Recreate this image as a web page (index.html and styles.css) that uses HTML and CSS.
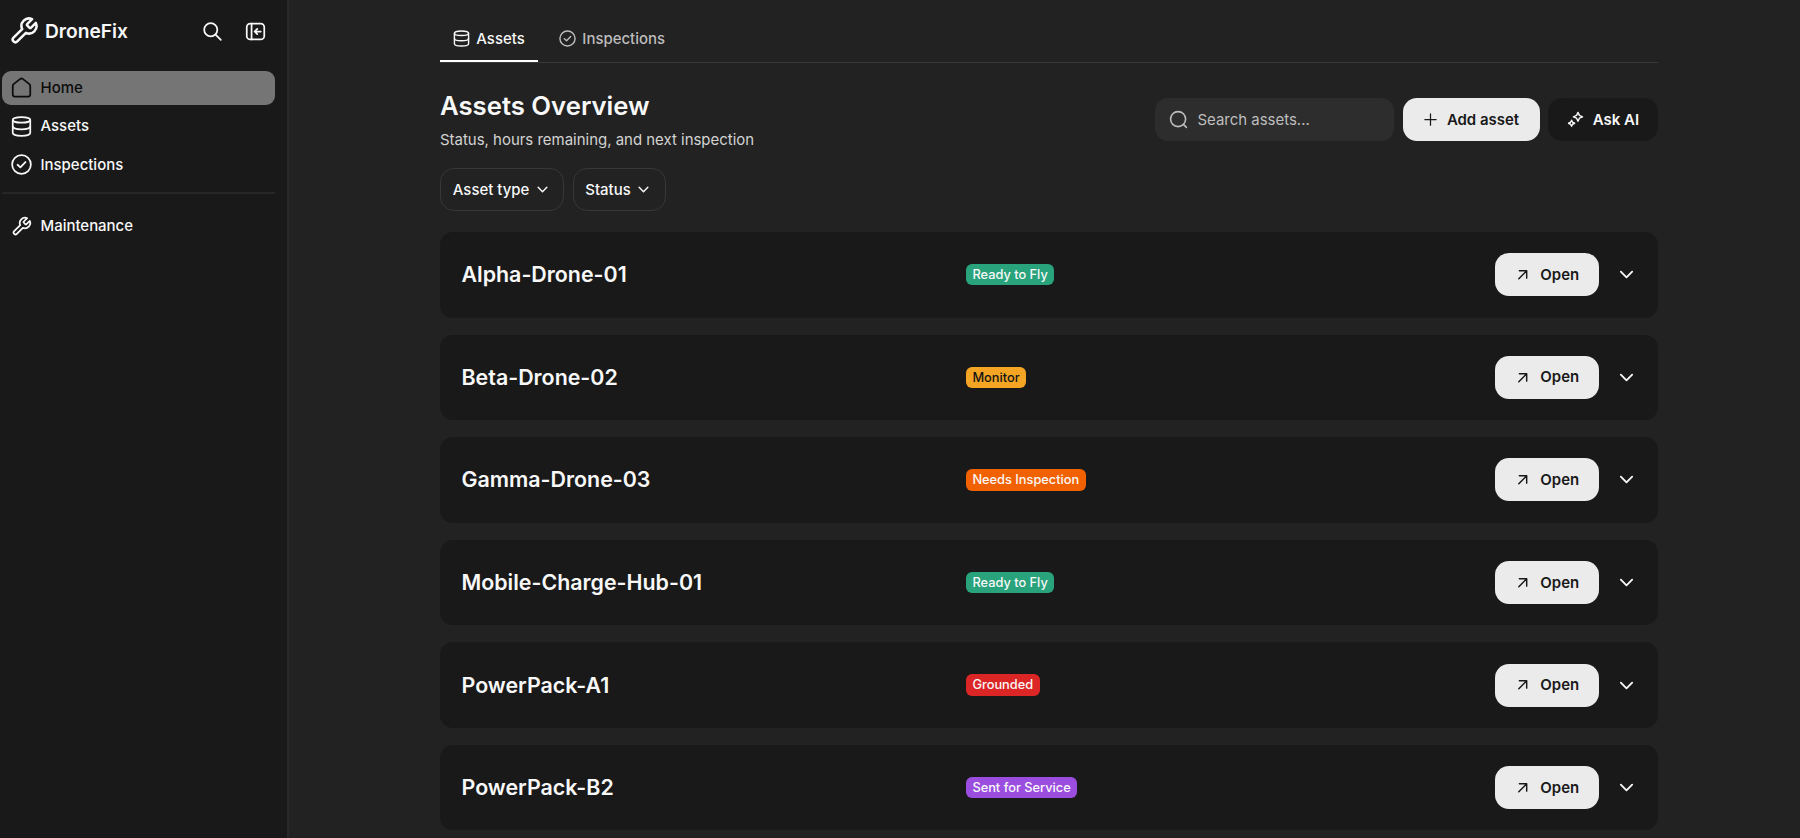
FILE: index.html
```html
<!DOCTYPE html>
<html lang="en">
<head>
  <meta charset="UTF-8" />
  <meta name="viewport" content="width=device-width, initial-scale=1.0"/>
  <title>DroneFix</title>
  <link rel="stylesheet" href="styles.css">
</head>
<body>
  <!-- Icon sprite -->
  <svg class="sprite" width="0" height="0">
    <symbol id="wrench" viewBox="0 0 24 24"><path d="M14.7 6.3a1 1 0 0 0 0 1.4l1.6 1.6a1 1 0 0 0 1.4 0l3.77-3.77a6 6 0 0 1-7.94 7.94l-6.91 6.91a2.12 2.12 0 0 1-3-3l6.91-6.91a6 6 0 0 1 7.94-7.94l-3.76 3.76z"/></symbol>
    <symbol id="search" viewBox="0 0 24 24"><circle cx="10" cy="10" r="7.5"/><path d="M15.5 15.5l6 6"/></symbol>
    <symbol id="search-round" viewBox="0 0 24 24"><circle cx="11.5" cy="11.5" r="9.5"/><path d="M18.5 18.5L22 22"/></symbol>
    <symbol id="collapse" viewBox="0 0 24 24"><rect x="2" y="3" width="20" height="18" rx="4"/><path d="M7.5 3v18M18 12h-6.5M14 9l-3 3 3 3"/></symbol>
    <symbol id="home" viewBox="0 0 24 24"><path d="M2 10.2c0-.8.4-1.5 1-2l7.6-6c.8-.6 2-.6 2.8 0l7.6 6c.6.5 1 1.2 1 2V20a2.5 2.5 0 0 1-2.5 2.5h-15A2.5 2.5 0 0 1 2 20z"/></symbol>
    <symbol id="database" viewBox="0 0 24 24"><ellipse cx="12" cy="4.5" rx="10" ry="3.2"/><path d="M2 4.5v15c0 1.8 4.5 3.2 10 3.2s10-1.4 10-3.2v-15"/><path d="M2 12c0 1.8 4.5 3.2 10 3.2s10-1.4 10-3.2"/></symbol>
    <symbol id="check" viewBox="0 0 24 24"><circle cx="12" cy="12" r="10.7"/><path d="M7.5 12.3l3.2 3 5.8-6.1"/></symbol>
    <symbol id="chevron" viewBox="0 0 24 24"><path d="M4 8l8 8 8-8"/></symbol>
    <symbol id="plus" viewBox="0 0 24 24"><path d="M12 3v18M3 12h18"/></symbol>
    <symbol id="arrow" viewBox="0 0 24 24"><path d="M5 19L19 5M6 5h13v13"/></symbol>
    <symbol id="sparkles" viewBox="0 0 24 24"><path d="M15.5 2l2 4.2 4.500 2-4.500 2-2 4.300-2-4.300-4.500-2 4.500-2z"/><path d="M6.500 13l1.400 2.900 2.900 1.400-2.900 1.400-1.400 2.900-1.400-2.900-2.900-1.400 2.900-1.400z"/></symbol>
  </svg>

  <div class="app">
    <aside class="sidebar">
      <div class="brand">
        <svg class="icon brand-logo"><use href="#wrench"/></svg>
        <span class="brand-name">DroneFix</span>
        <div class="brand-actions">
          <svg class="icon"><use href="#search"/></svg>
          <svg class="icon"><use href="#collapse"/></svg>
        </div>
      </div>
      <nav class="menu">
        <a class="menu-item active"><svg class="icon"><use href="#home"/></svg><span>Home</span></a>
        <a class="menu-item"><svg class="icon"><use href="#database"/></svg><span>Assets</span></a>
        <a class="menu-item"><svg class="icon"><use href="#check"/></svg><span>Inspections</span></a>
      </nav>
      <nav class="menu menu-secondary">
        <a class="menu-item"><svg class="icon"><use href="#wrench"/></svg><span>Maintenance</span></a>
      </nav>
    </aside>

    <main class="content">
      <div class="tabs">
        <a class="tab active"><svg class="icon"><use href="#database"/></svg><span>Assets</span></a>
        <a class="tab"><svg class="icon"><use href="#check"/></svg><span>Inspections</span></a>
      </div>

      <header class="page-header">
        <div class="heading">
          <h1>Assets Overview</h1>
          <p>Status, hours remaining, and next inspection</p>
        </div>
        <div class="actions">
          <div class="search"><svg class="icon"><use href="#search-round"/></svg><span>Search assets...</span></div>
          <button class="btn btn-light add"><svg class="icon"><use href="#plus"/></svg><span>Add asset</span></button>
          <button class="btn btn-dark"><svg class="icon"><use href="#sparkles"/></svg><span>Ask AI</span></button>
        </div>
      </header>

      <div class="filters">
        <button class="filter type"><span>Asset type</span><svg class="icon"><use href="#chevron"/></svg></button>
        <button class="filter status"><span>Status</span><svg class="icon"><use href="#chevron"/></svg></button>
      </div>

      <div class="asset-list">
        <div class="asset">
          <h2>Alpha-Drone-01</h2>
          <div class="state"><span class="badge ready">Ready to Fly</span></div>
          <button class="btn btn-light open"><svg class="icon"><use href="#arrow"/></svg><span>Open</span></button>
          <svg class="icon expand"><use href="#chevron"/></svg>
        </div>
        <div class="asset">
          <h2>Beta-Drone-02</h2>
          <div class="state"><span class="badge monitor">Monitor</span></div>
          <button class="btn btn-light open"><svg class="icon"><use href="#arrow"/></svg><span>Open</span></button>
          <svg class="icon expand"><use href="#chevron"/></svg>
        </div>
        <div class="asset">
          <h2>Gamma-Drone-03</h2>
          <div class="state"><span class="badge needs">Needs Inspection</span></div>
          <button class="btn btn-light open"><svg class="icon"><use href="#arrow"/></svg><span>Open</span></button>
          <svg class="icon expand"><use href="#chevron"/></svg>
        </div>
        <div class="asset">
          <h2>Mobile-Charge-Hub-01</h2>
          <div class="state"><span class="badge ready">Ready to Fly</span></div>
          <button class="btn btn-light open"><svg class="icon"><use href="#arrow"/></svg><span>Open</span></button>
          <svg class="icon expand"><use href="#chevron"/></svg>
        </div>
        <div class="asset">
          <h2>PowerPack-A1</h2>
          <div class="state"><span class="badge grounded">Grounded</span></div>
          <button class="btn btn-light open"><svg class="icon"><use href="#arrow"/></svg><span>Open</span></button>
          <svg class="icon expand"><use href="#chevron"/></svg>
        </div>
        <div class="asset">
          <h2>PowerPack-B2</h2>
          <div class="state"><span class="badge service">Sent for Service</span></div>
          <button class="btn btn-light open"><svg class="icon"><use href="#arrow"/></svg><span>Open</span></button>
          <svg class="icon expand"><use href="#chevron"/></svg>
        </div>
      </div>
    </main>
  </div>
</body>
</html>
```
FILE: styles.css
```css
* {
  box-sizing: border-box;
}
body {
  margin: 0;
  background: #222;
  color: #f8f8f8;
  font-family: Inter, "Liberation Sans", sans-serif;
  font-size: 14.96px;
  line-height: 20px;
  overflow: hidden;
}
h1, h2, p {
  margin: 0;
}
button {
  font: inherit;
  color: inherit;
  border: none;
  padding: 0;
}
.sprite {
  display: none;
}
.icon {
  fill: none;
  stroke: currentColor;
  stroke-width: 2;
  stroke-linecap: round;
  stroke-linejoin: round;
  flex: none;
}
.app {
  display: flex;
  height: 100vh;
}

/* Sidebar */
.sidebar {
  width: 289px;
  flex: none;
  background: #191919;
  border-right: 2px solid #292929;
  padding: 0 12px 0 2px;
}
.brand {
  display: flex;
  align-items: center;
  height: 62px;
  padding: 0 9px 0 7px;
  margin-bottom: 8.5px;
}
.brand-logo {
  width: 30px;
  height: 30px;
}
.brand-name {
  margin-left: 6px;
  font-size: 19.2px;
  font-weight: 600;
}
.brand-actions {
  display: flex;
  gap: 22px;
  margin-left: auto;
}
.brand-actions .icon {
  width: 21px;
  height: 21px;
}
.menu {
  display: flex;
  flex-direction: column;
  gap: 4.5px;
}
.menu-secondary {
  margin-top: 10px;
  padding-top: 15px;
  border-top: 2px solid #262626;
}
.menu-item {
  display: flex;
  align-items: center;
  gap: 8.5px;
  height: 34.2px;
  padding: 0 9px;
  border-radius: 9px;
  font-weight: 500;
}
.menu-item .icon {
  width: 21px;
  height: 21px;
}
.menu-item.active {
  background: #757575;
  color: #0c0c0c;
}

/* Main column */
.content {
  flex: 1;
  padding: 17px 142px 0 151px;
}
.tabs {
  display: flex;
  gap: 8.5px;
  height: 46px;
  border-bottom: 1px solid #383838;
}
.tab {
  display: flex;
  align-items: center;
  gap: 6.5px;
  height: 45px;
  padding: 0 12.8px;
  color: #bdbdbd;
  border-bottom: 2px solid transparent;
  font-weight: 500;
}
.tab .icon {
  width: 17px;
  height: 17px;
}
.tab.active {
  color: #f8f8f8;
  border-color: #fff;
}
.page-header {
  display: flex;
  justify-content: space-between;
  align-items: center;
  margin-top: 26px;
  height: 61px;
}
h1 {
  font-size: 25.7px;
  line-height: 34px;
  font-weight: 600;
}
.heading p {
  margin-top: 7px;
  color: #d2d2d2;
}
.actions {
  display: flex;
  gap: 8.5px;
}
.search {
  display: flex;
  align-items: center;
  gap: 9.5px;
  width: 239px;
  height: 43px;
  padding-left: 14px;
  border-radius: 13px;
  background: #2d2d2d;
  color: #bdbdbd;
}
.search .icon {
  width: 19px;
  height: 19px;
}
.btn {
  display: flex;
  align-items: center;
  justify-content: center;
  gap: 9px;
  height: 43px;
  border-radius: 14px;
  font-weight: 600;
}
.btn .icon {
  width: 17px;
  height: 17px;
}
.btn-light {
  background: #ebebeb;
  color: #191919;
}
.btn-dark {
  width: 110px;
  background: #191919;
}
.add {
  width: 137px;
  gap: 9px;
}
.add .icon {
  width: 15px;
  height: 15px;
}
.filters {
  display: flex;
  gap: 8.5px;
  margin-top: 18px;
}
.filter {
  display: flex;
  align-items: center;
  gap: 6.5px;
  height: 43px;
  padding-left: 11.8px;
  border: 1px solid #373737;
  border-radius: 14px;
  background: none;
  font-weight: 500;
}
.filter .icon {
  width: 13px;
  height: 13px;
  stroke-width: 2.7;
}
.type {
  width: 124px;
}
.status {
  width: 93px;
}

/* Asset rows */
.asset-list {
  display: flex;
  flex-direction: column;
  gap: 17.1px;
  margin-top: 21px;
}
.asset {
  display: flex;
  align-items: center;
  height: 85.5px;
  flex: none;
  padding: 0 23.5px 0 21.5px;
  border-radius: 13px;
  background: #191919;
}
h2 {
  width: 504.5px;
  margin-top: -1px;
  font-size: 21.4px;
  line-height: 28px;
  font-weight: 600;
}
.state {
  flex: 1;
  display: flex;
}
.badge {
  height: 21.4px;
  padding: 0 6.4px;
  border-radius: 6px;
  font-size: 12.8px;
  line-height: 21px;
  font-weight: 500;
}
.ready {
  background: #29a37c;
}
.monitor {
  background: #f5a524;
  color: #141414;
}
.needs {
  background: #f26100;
}
.grounded {
  background: #dc2626;
}
.service {
  background: #9b4de0;
}
.open {
  width: 103.5px;
  gap: 11px;
  padding-left: 1.5px;
}
.open .icon {
  width: 13.5px;
  height: 13.5px;
  stroke-width: 2.6;
}
.expand {
  width: 17px;
  height: 17px;
  margin-left: 19px;
  stroke-width: 2.6;
}
```
